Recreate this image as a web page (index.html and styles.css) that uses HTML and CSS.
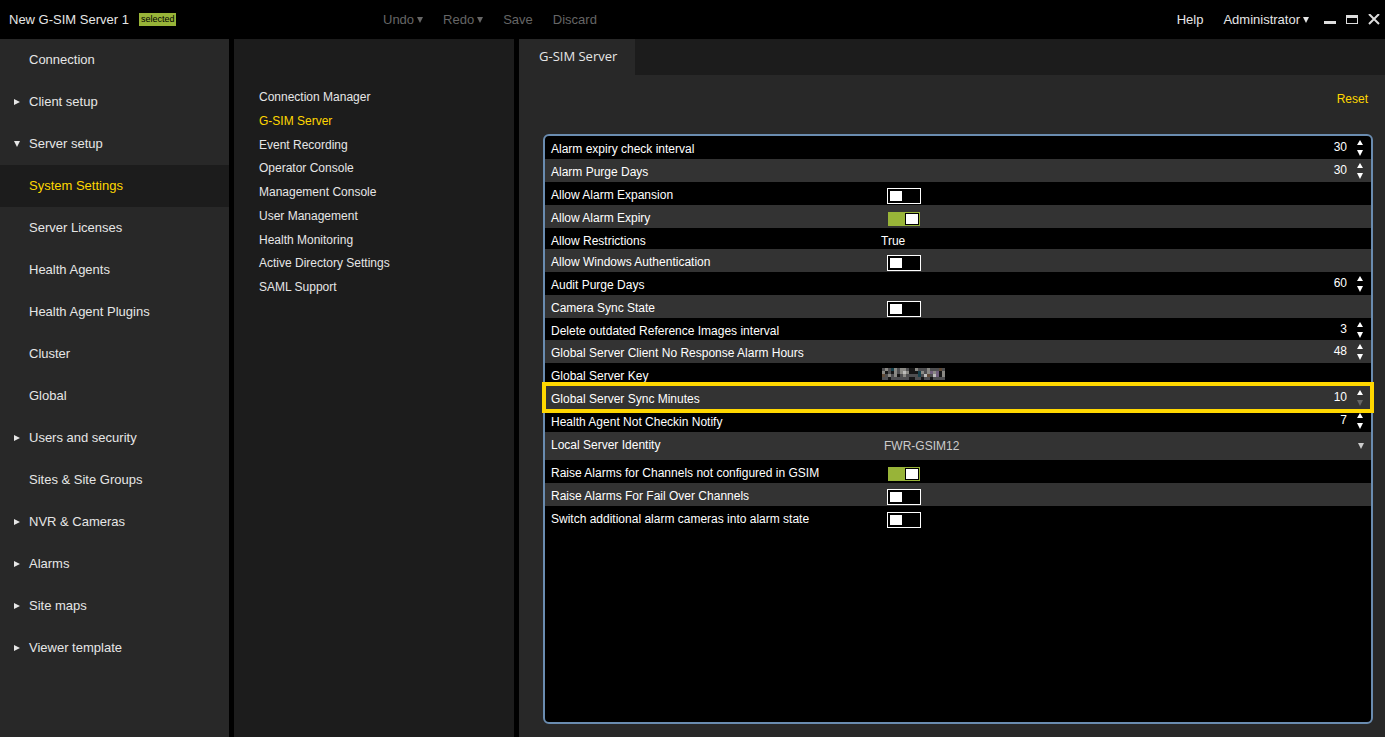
FILE: index.html
```html
<!DOCTYPE html>
<html lang="en">
<head>
<meta charset="utf-8">
<title>New G-SIM Server 1</title>
<link rel="stylesheet" href="styles.css">
</head>
<body>
<svg class="defs" aria-hidden="true">
  <symbol id="down" viewBox="0 0 6 6"><path d="M0 0h6L3 6z"/></symbol>
  <symbol id="right" viewBox="0 0 6 6"><path d="M0 0v6l6-3z"/></symbol>
  <symbol id="up" viewBox="0 0 6 6"><path d="M0 5h6L3 0z"/></symbol>
</svg>
<div class="app">
  <header class="topbar">
    <div class="title"><h1>New G-SIM Server 1</h1><span class="tag">selected</span></div>
    <div class="actions">
      <button class="action" disabled>Undo<svg class="caret"><use href="#down"/></svg></button>
      <button class="action" disabled>Redo<svg class="caret"><use href="#down"/></svg></button>
      <button class="action" disabled>Save</button>
      <button class="action" disabled>Discard</button>
    </div>
    <div class="user">
      <button class="menu">Help</button>
      <button class="menu">Administrator<svg class="caret"><use href="#down"/></svg></button>
      <div class="window">
        <button class="win" aria-label="Minimize"><svg width="12" height="12"><path d="M0 7h12v3H0z" fill="#ddd"/></svg></button>
        <button class="win" aria-label="Maximize"><svg width="12" height="12"><path d="M0 1h12v9H0zM1 4v5h10V4z" fill="#ddd" fill-rule="evenodd"/></svg></button>
        <button class="win" aria-label="Close"><svg width="12" height="12"><path d="M1 0l10 10M11 0L1 10" stroke="#ddd" stroke-width="2"/></svg></button>
      </div>
    </div>
  </header>
  <div class="body">
    <nav class="sidebar" aria-label="Setup">
      <a class="nav" href="#"><span class="mark"></span>Connection</a>
      <a class="nav" href="#"><span class="mark"><svg class="caret"><use href="#right"/></svg></span>Client setup</a>
      <a class="nav" href="#"><span class="mark"><svg class="caret"><use href="#down"/></svg></span>Server setup</a>
      <a class="nav current" href="#"><span class="mark"></span>System Settings</a>
      <a class="nav" href="#"><span class="mark"></span>Server Licenses</a>
      <a class="nav" href="#"><span class="mark"></span>Health Agents</a>
      <a class="nav" href="#"><span class="mark"></span>Health Agent Plugins</a>
      <a class="nav" href="#"><span class="mark"></span>Cluster</a>
      <a class="nav" href="#"><span class="mark"></span>Global</a>
      <a class="nav" href="#"><span class="mark"><svg class="caret"><use href="#right"/></svg></span>Users and security</a>
      <a class="nav" href="#"><span class="mark"></span>Sites &amp; Site Groups</a>
      <a class="nav" href="#"><span class="mark"><svg class="caret"><use href="#right"/></svg></span>NVR &amp; Cameras</a>
      <a class="nav" href="#"><span class="mark"><svg class="caret"><use href="#right"/></svg></span>Alarms</a>
      <a class="nav" href="#"><span class="mark"><svg class="caret"><use href="#right"/></svg></span>Site maps</a>
      <a class="nav" href="#"><span class="mark"><svg class="caret"><use href="#right"/></svg></span>Viewer template</a>
    </nav>
    <nav class="sections" aria-label="System Settings">
      <div class="section-list">
        <a href="#">Connection Manager</a>
        <a class="current" href="#">G-SIM Server</a>
        <a href="#">Event Recording</a>
        <a href="#">Operator Console</a>
        <a href="#">Management Console</a>
        <a href="#">User Management</a>
        <a href="#">Health Monitoring</a>
        <a href="#">Active Directory Settings</a>
        <a href="#">SAML Support</a>
      </div>
    </nav>
    <main class="main">
      <div class="tabs"><button class="tab">G-SIM Server</button></div>
      <div class="content">
        <div class="tools"><button class="reset">Reset</button></div>
        <div class="panel">
          <div class="row"><label for="f1">Alarm expiry check interval</label><div class="number"><input id="f1" type="number" value="30"><span class="steps"><button class="step" aria-label="Increase"><svg class="caret"><use href="#up"/></svg></button><button class="step" aria-label="Decrease"><svg class="caret"><use href="#down"/></svg></button></span></div></div>
          <div class="row"><label for="f2">Alarm Purge Days</label><div class="number"><input id="f2" type="number" value="30"><span class="steps"><button class="step" aria-label="Increase"><svg class="caret"><use href="#up"/></svg></button><button class="step" aria-label="Decrease"><svg class="caret"><use href="#down"/></svg></button></span></div></div>
          <div class="row"><label for="f3">Allow Alarm Expansion</label><input class="toggle" id="f3" type="checkbox"></div>
          <div class="row"><label for="f4">Allow Alarm Expiry</label><input class="toggle" id="f4" type="checkbox" checked></div>
          <div class="row text-row"><span>Allow Restrictions</span><span>True</span></div>
          <div class="row"><label for="f5">Allow Windows Authentication</label><input class="toggle" id="f5" type="checkbox"></div>
          <div class="row"><label for="f6">Audit Purge Days</label><div class="number"><input id="f6" type="number" value="60"><span class="steps"><button class="step" aria-label="Increase"><svg class="caret"><use href="#up"/></svg></button><button class="step" aria-label="Decrease"><svg class="caret"><use href="#down"/></svg></button></span></div></div>
          <div class="row"><label for="f7">Camera Sync State</label><input class="toggle" id="f7" type="checkbox"></div>
          <div class="row short-row"><label for="f8">Delete outdated Reference Images interval</label><div class="number"><input id="f8" type="number" value="3"><span class="steps"><button class="step" aria-label="Increase"><svg class="caret"><use href="#up"/></svg></button><button class="step" aria-label="Decrease"><svg class="caret"><use href="#down"/></svg></button></span></div></div>
          <div class="row"><label for="f9">Global Server Client No Response Alarm Hours</label><div class="number"><input id="f9" type="number" value="48"><span class="steps"><button class="step" aria-label="Increase"><svg class="caret"><use href="#up"/></svg></button><button class="step" aria-label="Decrease"><svg class="caret"><use href="#down"/></svg></button></span></div></div>
          <div class="row"><span>Global Server Key</span>
            <svg class="masked" viewBox="0 0 21 4" shape-rendering="crispEdges" role="img" aria-label="Hidden key">
              <path fill="#4e4e50" d="M0 0h21v4H0z"/>
              <path fill="#8a8984" d="M1 0h1v1h-1zM3 0h2v1h-2zM6 0h2v1h-2zM0 1h1v1h-1zM4 1h1v1h-1zM6 1h1v1h-1zM8 1h1v1h-1zM2 2h1v1h-1zM4 2h1v1h-1zM7 2h1v1h-1zM11 0h1v1h-1zM13 1h1v1h-1zM15 0h1v2h-1zM17 1h1v2h-1zM20 1h1v2h-1z"/>
              <path fill="#161616" d="M1 1h1v1h-1zM3 1h1v1h-1zM9 0h2v1h-2zM9 1h2v1h-2zM5 2h1v1h-1zM11 1h1v1h-1zM2 3h1v1h-1zM9 3h2v1h-2zM13 3h1v1h-1zM16 3h1v1h-1zM19 1h1v2h-1z"/>
              <path fill="#bdbdbb" d="M14 2h1v1h-1zM17 2h1v1h-1zM7 1h1v1h-1z"/>
              <path fill="#705f7c" d="M16 1h1v1h-1zM18 1h1v2h-1z"/>
              <path fill="#17414c" d="M12 1h1v2h-1zM3 0h1v1h-1z"/>
              <path fill="#604b38" d="M0 2h1v1h-1zM19 0h1v1h-1zM15 2h1v1h-1z"/>
            </svg></div>
          <div class="row marked"><label for="f10">Global Server Sync Minutes</label><div class="number"><input id="f10" type="number" value="10" min="10"><span class="steps"><button class="step" aria-label="Increase"><svg class="caret"><use href="#up"/></svg></button><button class="step" aria-label="Decrease" disabled><svg class="caret"><use href="#down"/></svg></button></span></div></div>
          <div class="row"><label for="f11">Health Agent Not Checkin Notify</label><div class="number"><input id="f11" type="number" value="7"><span class="steps"><button class="step" aria-label="Increase"><svg class="caret"><use href="#up"/></svg></button><button class="step" aria-label="Decrease"><svg class="caret"><use href="#down"/></svg></button></span></div></div>
          <div class="row select-row"><label for="f12">Local Server Identity</label><div class="choice"><select id="f12"><option>FWR-GSIM12</option></select><svg class="caret"><use href="#down"/></svg></div></div>
          <div class="row"><label for="f13">Raise Alarms for Channels not configured in GSIM</label><input class="toggle" id="f13" type="checkbox" checked></div>
          <div class="row"><label for="f14">Raise Alarms For Fail Over Channels</label><input class="toggle" id="f14" type="checkbox"></div>
          <div class="row"><label for="f15">Switch additional alarm cameras into alarm state</label><input class="toggle" id="f15" type="checkbox"></div>
        </div>
      </div>
    </main>
  </div>
</div>
</body>
</html>
```
FILE: styles.css
```css
*, ::before, ::after { box-sizing: border-box; }
body { margin: 0; background: #000; color: #e6e6e6; font: 13px/16px "Liberation Sans", Arial, sans-serif; }
button, input, select { margin: 0; padding: 0; border: 0; background: none; color: inherit; font: inherit; }
a { color: inherit; text-decoration: none; }
.defs { position: absolute; width: 0; height: 0; }
.caret { display: block; width: 6px; height: 6px; fill: currentColor; }

.app { display: flex; flex-direction: column; min-height: 100vh; }
.topbar { display: grid; grid-template-columns: 383px 1fr auto; align-items: center; height: 39px; }
.title { display: flex; align-items: center; gap: 10px; padding-left: 9px; }
h1 { margin: 0; font-size: 13px; font-weight: 400; }
.tag { padding: 0 2px; background: #98b438; color: #000; font-size: 9px; line-height: 13px; }
.actions { display: flex; gap: 20px; }
.action, .menu { display: flex; align-items: center; gap: 3px; }
.action { color: #666; }
.user { display: flex; align-items: center; gap: 20px; padding-right: 5px; }
.window { display: flex; gap: 10px; margin-left: -5px; }
.win svg { display: block; }

.body { display: grid; flex: 1; grid-template-columns: 229px 280px 1fr; gap: 5px; }
.sidebar { background: #282828; }
.nav { display: flex; align-items: center; height: 42px; padding-left: 14px; }
.mark { width: 15px; }
.current { color: #ffd700; }
.nav.current { background: #1c1c1c; }
.sections { padding: 50px 25px; background: #1c1c1c; font-size: 12px; }
.section-list { display: flex; flex-direction: column; justify-content: space-between; min-height: 206px; }

.main { display: flex; flex-direction: column; background: #282828; }
.tabs { display: flex; height: 36px; background: #1c1c1c; }
.tab { padding: 0 18px 2px 20px; background: #282828; font: 13px/16px "Open Sans", sans-serif; }
.content { display: flex; flex: 1; flex-direction: column; padding: 16px 12px 13px 24px; font-size: 12px; }
.tools { display: flex; justify-content: flex-end; padding: 0 5px 27px 0; }
.reset { color: #ffd700; }
.panel { flex: 1; border: 2px solid #6a8cb0; border-radius: 6px; background: #000; color: #fff; }
.row { position: relative; display: grid; grid-template-columns: 336px 1fr; align-items: start; height: 23px; padding-left: 6px; line-height: 27px; }
.row:nth-child(even) { background: #333; }
.text-row { height: 21px; }
.text-row > :last-child { margin-left: -6px; }
.short-row { height: 22px; }
.number { display: flex; justify-content: flex-end; gap: 10px; padding-right: 8px; }
.number input { flex: 1; min-width: 0; height: 22px; text-align: right; appearance: textfield; }
.number input::-webkit-inner-spin-button { appearance: none; margin: 0; }
.steps { display: flex; flex-direction: column; gap: 4px; padding-top: 4px; }
.step { display: block; line-height: 0; }
.step:disabled { color: #666; }
.toggle { display: block; width: 34px; height: 16px; margin-top: 6px; padding: 2px; border: 1px solid #fff; background: #000; appearance: none; }
.toggle::before { content: ""; display: block; width: 12px; height: 10px; background: #fff; }
.toggle:checked { width: 32px; height: 14px; margin-top: 7px; margin-left: 1px; padding: 0; border-color: #98b438; background: #98b438; }
.toggle:checked::before { width: 14px; height: 12px; margin-left: auto; border: 1px solid #000; }
.masked { width: 63px; height: 12px; margin: 5px 0 0 -5px; }
.marked { z-index: 1; }
.marked::after { content: ""; position: absolute; inset: -4px -3px; border: 4px solid #ffd700; pointer-events: none; }
.select-row { height: 28px; }
.choice { display: grid; grid-template-columns: 1fr 6px; align-items: center; height: 28px; padding-right: 7px; color: #ccc; }
.choice select { height: 28px; margin-left: -3px; appearance: none; }
.choice option { background: #333; }
```
